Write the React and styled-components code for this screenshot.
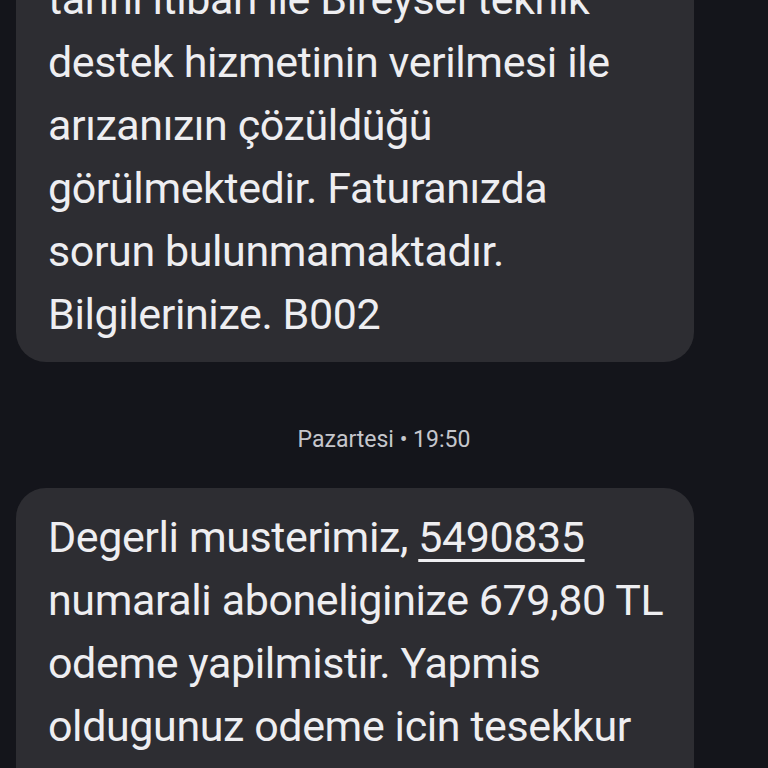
import React from "react";
import styled, { createGlobalStyle } from "styled-components";

const Global = createGlobalStyle`
  html, body { margin: 0; padding: 0; background: #14151b; }
  body { font-family: Roboto, "Noto Sans", sans-serif; -webkit-font-smoothing: antialiased; }
`;

const Screen = styled.div`
  width: 768px;
  height: 768px;
  overflow: hidden;
  background: #14151b;
  display: flex;
  flex-direction: column;
`;

const Thread = styled.div`
  display: flex;
  flex-direction: column;
  margin-top: ${(p) => p.$offset}px;
`;

const Bubble = styled.div`
  align-self: flex-start;
  margin-left: 16px;
  width: 678px;
  box-sizing: border-box;
  background: #2d2d32;
  border-radius: 30px;
  padding: 18px 20px 16px 32px;
  color: #eeeef1;
  font-size: 43px;
  line-height: 63px;
  letter-spacing: -0.4px;
`;

const Line = styled.span`
  display: block;
  white-space: nowrap;
`;

const Link = styled.span`
  text-decoration: underline;
  text-decoration-thickness: 3px;
  text-underline-offset: 7px;
`;

const Stamp = styled.div`
  text-align: center;
  color: #c5c6cc;
  font-size: 23px;
  line-height: 26px;
  margin: 65px 0 35px;
`;

export default function App() {
  return (
    <>
      <Global />
      <Screen>
        <Thread $offset={-113}>
          <Bubble>
            <Line>müracaat etmiş olduğunuz</Line>
            <Line>tarihi itibari ile Bireysel teknik</Line>
            <Line>destek hizmetinin verilmesi ile</Line>
            <Line>arızanızın çözüldüğü</Line>
            <Line>görülmektedir. Faturanızda</Line>
            <Line>sorun bulunmamaktadır.</Line>
            <Line>Bilgilerinize. B002</Line>
          </Bubble>
          <Stamp>Pazartesi • 19:50</Stamp>
          <Bubble>
            <Line>
              Degerli musterimiz, <Link>5490835</Link>
            </Line>
            <Line>numarali aboneliginize 679,80 TL</Line>
            <Line>odeme yapilmistir. Yapmis</Line>
            <Line>oldugunuz odeme icin tesekkur</Line>
            <Line>ederiz. B002</Line>
          </Bubble>
        </Thread>
      </Screen>
    </>
  );
}
